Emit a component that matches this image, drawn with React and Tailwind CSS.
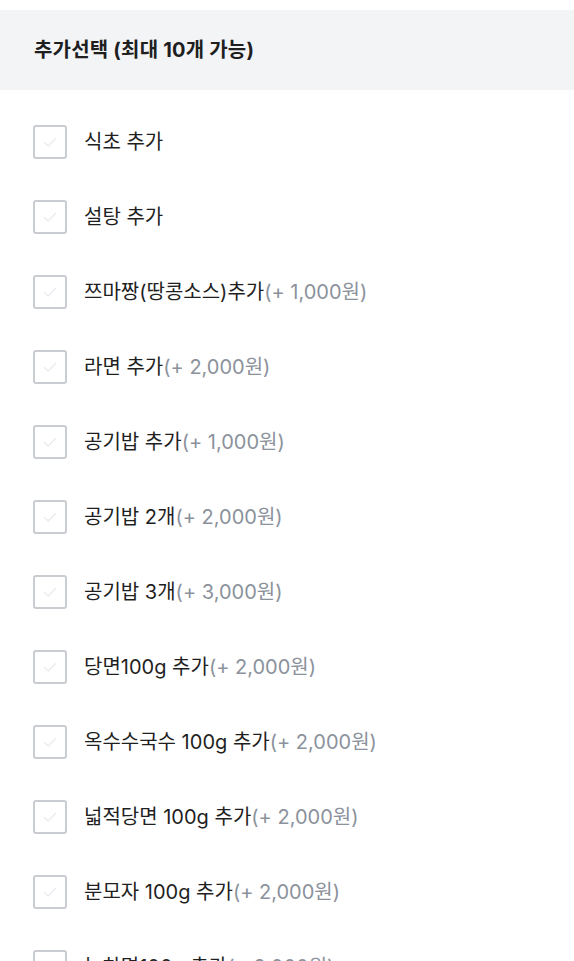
import React from "react";

const items = [
  ["식초 추가", null],
  ["설탕 추가", null],
  ["쯔마짱(땅콩소스)추가", "(+ 1,000원)"],
  ["라면 추가", "(+ 2,000원)"],
  ["공기밥 추가", "(+ 1,000원)"],
  ["공기밥 2개", "(+ 2,000원)"],
  ["공기밥 3개", "(+ 3,000원)"],
  ["당면100g 추가", "(+ 2,000원)"],
  ["옥수수국수 100g 추가", "(+ 2,000원)"],
  ["넓적당면 100g 추가", "(+ 2,000원)"],
  ["분모자 100g 추가", "(+ 2,000원)"],
  ["녹차면100g 추가", "(+ 2,000원)"],
];

function Box() {
  return (
    <div className="w-[34px] h-[34px] shrink-0 rounded-[3px] border-2 border-[#c9ccd1] bg-white flex items-center justify-center">
      <svg width="18" height="18" viewBox="0 0 18 18" fill="none">
        <path d="M3.5 9.5 L7.2 13 L14.5 5.5" stroke="#e9ebee" strokeWidth="1.4" strokeLinecap="round" strokeLinejoin="round" />
      </svg>
    </div>
  );
}

export default function App() {
  return (
    <div className="w-[574px] h-[961px] overflow-hidden bg-white pt-[10px]" style={{ fontFamily: 'Inter, "Noto Sans CJK KR", sans-serif' }}>
      <div className="h-[80px] bg-[#f3f4f6] flex items-center px-[34px]">
        <span className="text-[20px] font-bold text-[#1f1f1f] tracking-[0.2px]">추가선택 (최대 10개 가능)</span>
      </div>
      <div className="pt-[14px] px-[33px]">
        {items.map(([name, price], i) => (
          <div key={i} className="h-[75px] flex items-center gap-[17px]">
            <Box />
            <span className="text-[20px] text-[#1f1f1f] leading-none">
              {name}
              {price && <span className="text-[#8b929c]">{price}</span>}
            </span>
          </div>
        ))}
      </div>
    </div>
  );
}
